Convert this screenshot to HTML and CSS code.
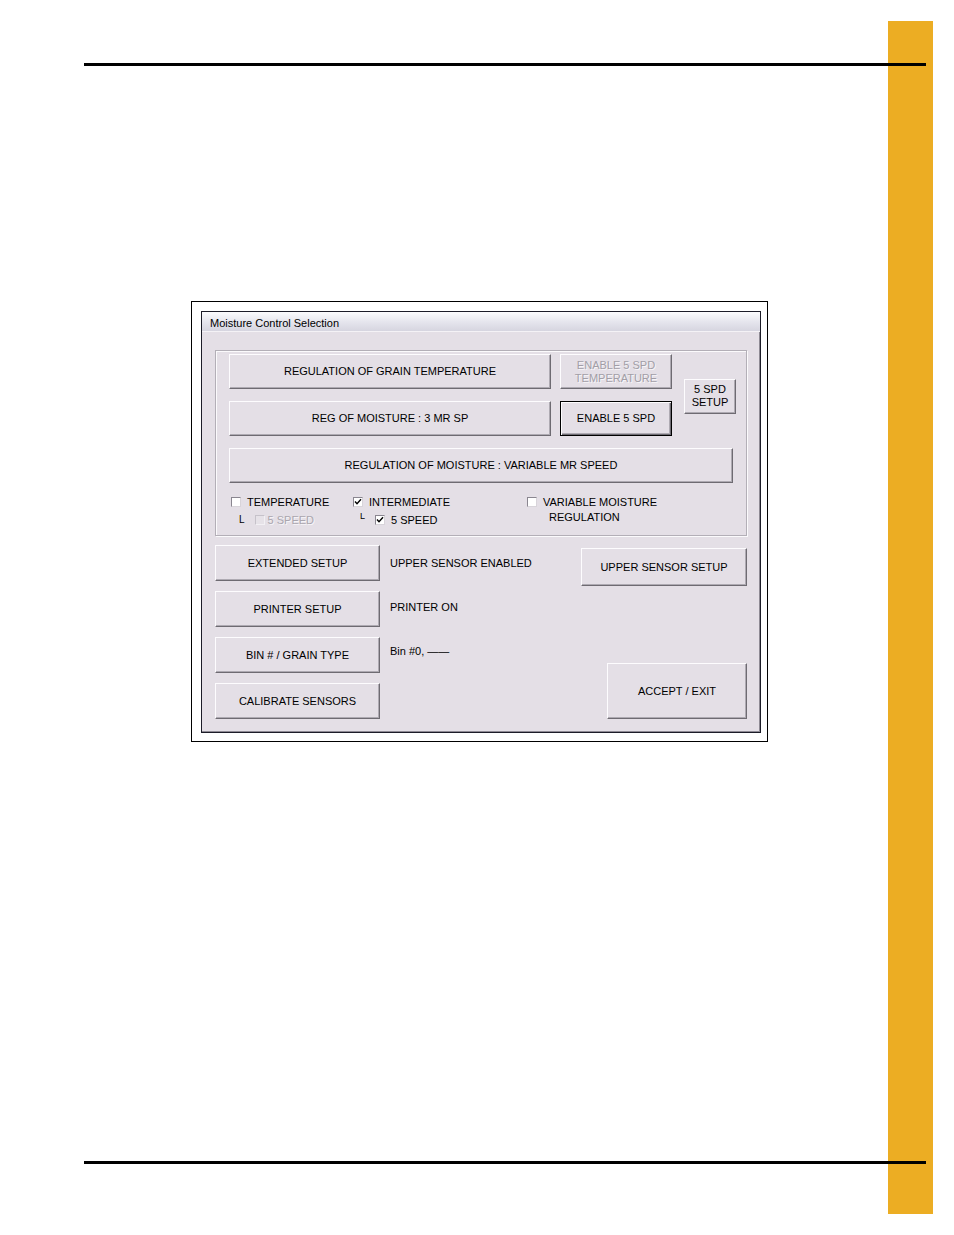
FILE: index.html
```html
<!DOCTYPE html>
<html>
<head>
<meta charset="utf-8">
<link rel="stylesheet" href="styles.css">
</head>
<body>
<div class="page">
  <div class="tab"></div>
  <div class="rule rule-top"></div>
  <div class="figure">
    <div class="window">
      <div class="titlebar">Moisture Control Selection</div>
      <div class="client">
        <div class="group">
          <div class="grid">
            <div class="btn">REGULATION OF GRAIN TEMPERATURE</div>
            <div class="btn disabled">ENABLE 5 SPD<br>TEMPERATURE</div>
            <div class="btn spd">5 SPD<br>SETUP</div>
            <div class="btn">REG OF MOISTURE : 3 MR SP</div>
            <div class="btn default">ENABLE 5 SPD</div>
            <div class="btn var">REGULATION OF MOISTURE : VARIABLE MR SPEED</div>
          </div>
          <div class="checks">
            <div class="col c1">
              <div class="chk"><span class="box"></span><span>TEMPERATURE</span></div>
              <div class="chk sub"><span class="ell">L</span><span class="box off"></span><span class="dim">5 SPEED</span></div>
            </div>
            <div class="col c2">
              <div class="chk"><span class="box"><svg viewBox="0 0 8 8" width="8" height="8"><path d="M1 3.5 L3 5.8 L7 1.2" fill="none" stroke="#000" stroke-width="1.4"/></svg></span><span>INTERMEDIATE</span></div>
              <div class="chk sub"><span class="ell ell2">L</span><span class="box"><svg viewBox="0 0 8 8" width="8" height="8"><path d="M1 3.5 L3 5.8 L7 1.2" fill="none" stroke="#000" stroke-width="1.4"/></svg></span><span>5 SPEED</span></div>
            </div>
            <div class="col c3">
              <div class="chk"><span class="box"></span><span>VARIABLE MOISTURE</span></div>
              <div class="chk sub"><span class="indent">REGULATION</span></div>
            </div>
          </div>
        </div>
        <div class="lower">
          <div class="leftcol">
            <div class="btn lbtn">EXTENDED SETUP</div>
            <div class="btn lbtn">PRINTER SETUP</div>
            <div class="btn lbtn">BIN # / GRAIN TYPE</div>
            <div class="btn lbtn">CALIBRATE SENSORS</div>
          </div>
          <div class="labels">
            <div class="lbl">UPPER SENSOR ENABLED</div>
            <div class="lbl">PRINTER ON</div>
            <div class="lbl">Bin #0, ——</div>
          </div>
          <div class="rightcol">
            <div class="btn usetup">UPPER SENSOR SETUP</div>
            <div class="btn accept">ACCEPT / EXIT</div>
          </div>
        </div>
      </div>
    </div>
  </div>
  <div class="rule rule-bottom"></div>
</div>
</body>
</html>
```

FILE: styles.css
```css
html, body {
  margin: 0;
  padding: 0;
  background: #fff;
}
.page {
  position: relative;
  width: 954px;
  height: 1235px;
  overflow: hidden;
  font-family: "Liberation Sans", Arial, sans-serif;
}
.tab {
  position: absolute;
  left: 888px;
  top: 21px;
  width: 45px;
  height: 1193px;
  background: #ecad23;
}
.rule {
  position: relative;
  z-index: 1;
  margin-left: 84px;
  width: 842px;
  height: 3px;
  background: #000;
}
.rule-top {
  margin-top: 63px;
}
.rule-bottom {
  margin-top: 419px;
}
.figure {
  margin: 235px 0 0 191px;
  width: 575px;
  height: 439px;
  border: 1px solid #000;
  box-sizing: content-box;
  padding: 0;
  display: flex;
}
.window {
  margin: 9px 0 0 9px;
  width: 560px;
  height: 422px;
  box-sizing: border-box;
  border: 1px solid #1c1c28;
  background: #e4dfe6;
  box-shadow: inset -1px -1px 0 #8e8a94;
  display: flex;
  flex-direction: column;
}
.titlebar {
  height: 19px;
  line-height: 22px;
  padding-left: 8px;
  font-size: 11px;
  color: #000;
  background: linear-gradient(#fbfbfd, #e6e6ee 50%, #d6d5e0);
  border-bottom: 1px solid #f4f2f6;
}
.client {
  padding: 18px 0 0 13px;
  display: flex;
  flex-direction: column;
}
.group {
  width: 532px;
  height: 186px;
  box-sizing: border-box;
  border: 1px solid #b3afb7;
  box-shadow: inset 1px 1px 0 #fbfafc, 1px 1px 0 #fbfafc;
  padding: 3px 0 0 13px;
}
.btn {
  box-sizing: border-box;
  display: flex;
  align-items: center;
  justify-content: center;
  text-align: center;
  font-size: 11px;
  line-height: 13px;
  color: #000;
  background: #e4dfe6;
  border: 1px solid;
  border-color: #fdfcfe #6e6b72 #6e6b72 #fdfcfe;
  box-shadow: inset -1px -1px 0 #aeaab2;
  white-space: nowrap;
}
.grid {
  display: grid;
  grid-template-columns: 322px 112px 55px;
  grid-template-rows: 35px 35px 35px;
  column-gap: 9px;
  row-gap: 12px;
}
.grid .spd {
  grid-column: 3;
  grid-row: 1 / span 2;
  align-self: center;
  height: 35px;
  margin-left: 3px;
  margin-top: 2px;
}
.grid .var {
  grid-column: 1 / span 3;
  width: 504px;
}
.btn.disabled {
  color: #a29ea6;
  text-shadow: 1px 1px 0 #f7f5f8;
}
.btn.default {
  border: 1px solid #000;
  box-shadow: inset 1px 1px 0 #fdfcfe, inset -1px -1px 0 #6e6b72, inset -2px -2px 0 #aeaab2;
}
.checks {
  display: grid;
  grid-template-columns: 122px 174px auto;
  margin-top: 10px;
  padding-left: 2px;
  font-size: 11px;
  color: #000;
}
.col {
  display: flex;
  flex-direction: column;
}
.chk {
  display: flex;
  align-items: center;
  height: 18px;
  white-space: nowrap;
}
.box {
  box-sizing: border-box;
  width: 10px;
  height: 10px;
  margin-right: 6px;
  background: #fff;
  border: 1px solid;
  border-color: #8a8690 #d8d4da #d8d4da #8a8690;
  display: flex;
  align-items: center;
  justify-content: center;
}
.box.off {
  background: #e6e2e8;
  border-color: #c6c2ca #f2f0f4 #f2f0f4 #c6c2ca;
  margin-right: 3px;
}
.ell {
  font-size: 10px;
  margin: 0 10px 0 8px;
  line-height: 10px;
}
.ell2 {
  margin: -8px 10px 0 7px;
  font-size: 9px;
}
.dim {
  color: #aaa6ae;
  text-shadow: 1px 1px 0 #f7f5f8;
}
.indent {
  padding-left: 22px;
  margin-top: -6px;
}
.lower {
  margin-top: 9px;
  width: 532px;
  height: 174px;
  display: flex;
}
.leftcol {
  width: 165px;
  display: flex;
  flex-direction: column;
  justify-content: space-between;
}
.lbtn {
  height: 36px;
}
.labels {
  width: 190px;
  padding-left: 10px;
  display: flex;
  flex-direction: column;
  gap: 9px;
  font-size: 11px;
  color: #000;
}
.lbl {
  height: 36px;
  display: flex;
  align-items: center;
}
.lbl:nth-child(2) {
  margin-top: -1px;
}
.lbl:nth-child(3) {
  margin-top: -1px;
}
.rightcol {
  flex: 1;
  display: flex;
  flex-direction: column;
  justify-content: space-between;
  align-items: flex-end;
}
.usetup {
  margin-top: 3px;
  width: 166px;
  height: 38px;
}
.accept {
  width: 140px;
  height: 56px;
}
```
